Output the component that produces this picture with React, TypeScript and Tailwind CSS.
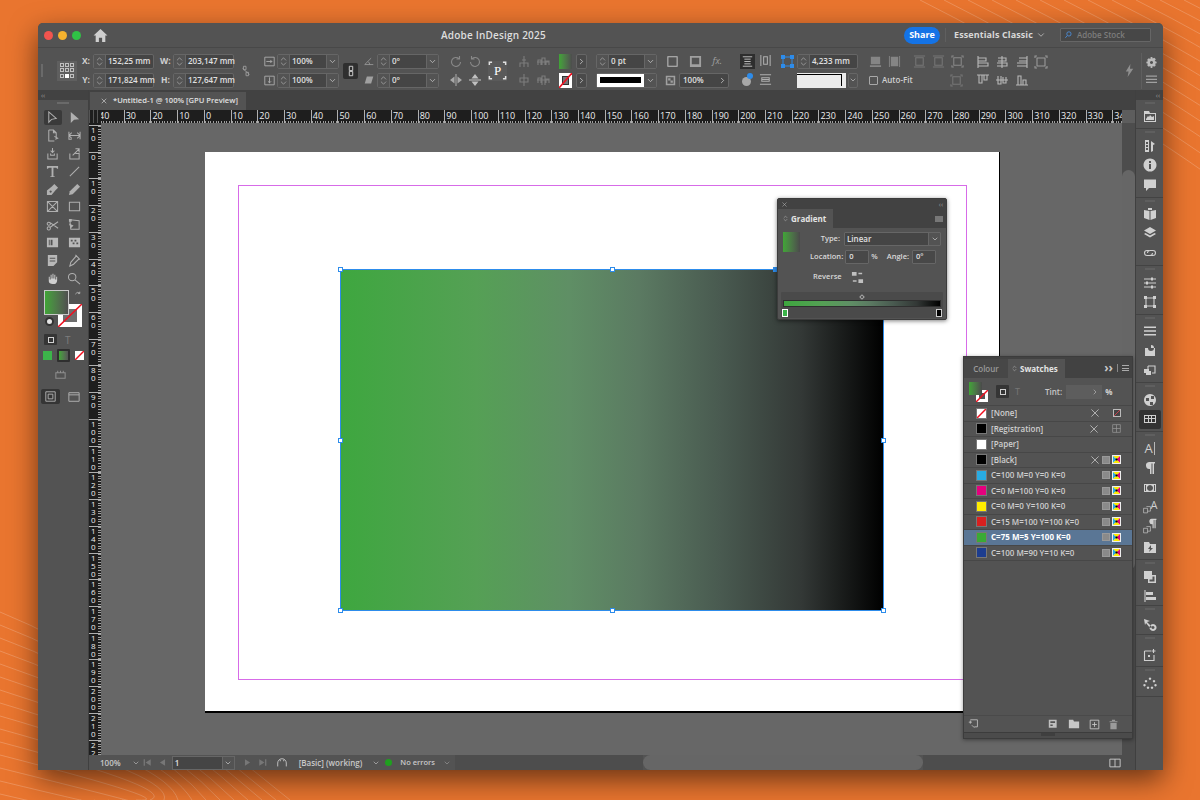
import React from 'react';
import { ChevronDown, ChevronRight, ChevronsUpDown, X } from 'lucide-react';

// small stroke/fill glyph on a 14 box
const Ico = ({ d, f, s = 14, className = 'text-[#a8a8a8]' }: { d?: string; f?: string; s?: number; className?: string }) => (
  <svg width={s} height={s} viewBox="0 0 14 14" fill="none" className={`shrink-0 ${className}`}>
    {d && <path d={d} stroke="currentColor" strokeWidth="1.1" />}
    {f && <path d={f} fill="currentColor" />}
  </svg>
);

const Stepper = () => (
  <div className="flex h-full w-[12px] shrink-0 items-center justify-center border-r border-[#666] bg-[#535353]">
    <ChevronsUpDown size={11} strokeWidth={1.3} className="text-[#c0c0c0]" />
  </div>
);

const Field = ({ value, w, drop }: { value: string; w: string; drop?: boolean }) => (
  <div className={`flex h-[15px] items-center rounded-[2px] border border-[#666] bg-[#454545] ${w}`}>
    <Stepper />
    <span className="flex-1 whitespace-nowrap pl-[2px] text-[8px] font-semibold text-[#e0e0e0]">{value}</span>
    {drop && (
      <div className="flex h-full w-[12px] items-center justify-center border-l border-[#666] bg-[#535353]">
        <ChevronDown size={9} strokeWidth={2} className="text-[#c8c8c8]" />
      </div>
    )}
  </div>
);

const Lbl = ({ children, w }: { children: string; w: string }) => (
  <span className={`shrink-0 pr-[3px] text-right text-[8.5px] font-bold text-[#d0d0d0] ${w}`}>{children}</span>
);

const TrafficLights = () => (
  <div className="flex gap-[5px] pl-[6px]">
    <span className="h-[9px] w-[9px] rounded-full bg-[#f2544e]" />
    <span className="h-[9px] w-[9px] rounded-full bg-[#f5b22e]" />
    <span className="h-[9px] w-[9px] rounded-full bg-[#30c146]" />
  </div>
);

const TitleBar = () => (
  <div className="relative flex h-[25px] shrink-0 items-center rounded-t-[5px] border-b border-[#484848] bg-[#535353]">
    <TrafficLights />
    <Ico s={15} className="ml-[12px] text-[#cfcfcf]" f="M7 1 L13.5 7 H11.5 V13 H8.5 V9 H5.5 V13 H2.5 V7 H.5 Z" />
    <span className="absolute left-[403px] text-[10px] font-semibold tracking-[0.2px] text-[#dedede]">Adobe InDesign 2025</span>
    <div className="ml-[796px] flex h-[17px] w-[36px] items-center justify-center rounded-full bg-[#1473e6] text-[9px] font-bold text-white">Share</div>
    <div className="ml-[5px] h-[14px] w-px bg-[#5f5f5f]" />
    <span className="ml-[8px] text-[9px] font-bold tracking-[0.1px] text-[#d8d8d8]">Essentials Classic</span>
    <ChevronDown size={10} strokeWidth={1.8} className="ml-[3px] text-[#c8c8c8]" />
    <div className="ml-[14px] flex h-[14px] w-[91px] items-center gap-[2px] rounded-[1px] border border-[#666] bg-[#474747] pl-[4px]">
      <Ico s={10} className="text-[#4a94e8]" d="M8.5 5.5a3 3 0 1 1-6 0a3 3 0 1 1 6 0M3 8l-2.5 3" />
      <span className="text-[8px] font-semibold text-[#7d7d7d]">Adobe Stock</span>
    </div>
  </div>
);

const RefGrid = () => (
  <div className="ml-[14px] grid h-[20px] w-[20px] grid-cols-3 place-items-center bg-[#5f5f5f] p-[2px]">
    {[0, 1, 2, 3, 4, 5, 6, 7, 8].map((i) => (
      <span key={i} className={i === 7 ? 'h-[4px] w-[4px] bg-white' : 'h-[4px] w-[4px] border border-[#c0c0c0]'} />
    ))}
  </div>
);

const Col2 = ({ a, b, className = '' }: { a: React.ReactNode; b: React.ReactNode; className?: string }) => (
  <div className={`flex flex-col gap-[4px] ${className}`}>
    <div className="flex h-[15px] items-center">{a}</div>
    <div className="flex h-[15px] items-center">{b}</div>
  </div>
);

const ArrowBtn = () => (
  <div className="flex h-[15px] w-[11px] items-center justify-center rounded-[2px] border border-[#666] bg-[#4a4a4a]">
    <ChevronRight size={9} strokeWidth={2} className="text-[#d0d0d0]" />
  </div>
);

const alignL = 'M2 1V13M2 3H10V6H2M2 8H12V11H2';
const alignC = 'M7 1V13M3 3H11V6H3M2 8H12V11H2';
const alignR = 'M12 1V13M4 3H12V6H4M2 8H12V11H2';
const alignT = 'M1 2H13M3 2V10H6V2M8 2V7H11V2';
const alignM = 'M1 7H13M3 3V11H6V3M8 4V10H11V4';
const alignB = 'M1 12H13M3 12V3H6V12M8 12V7H11V12';
const frameFit = 'M3 3H11V11H3ZM1 1H13M1 13H13';
const frameIn = 'M3 3H11V11H3ZM1 3V1H3M11 1H13V3M1 11V13H3M11 13H13V11';
const frameGradient = 'bg-[linear-gradient(90deg,#3ea73f_0%,#55a055_25%,#5f8f65_42%,#5b7a62_55%,#495a50_70%,#333836_85%,#000_100%)]';

const ControlBar = () => (
  <div className="flex h-[42px] shrink-0 items-center bg-[#535353] pt-[3px]">
    <div className="ml-[3px] h-[13px] w-[2px] bg-[#6a6a6a]" />
    <RefGrid />
    <Col2
      a={<><Lbl w="w-[16px]">X:</Lbl><Field value="152,25 mm" w="w-[61px]" /></>}
      b={<><Lbl w="w-[16px]">Y:</Lbl><Field value="171,824 mm" w="w-[61px]" /></>}
    />
    <Col2
      className="ml-[6px]"
      a={<><Lbl w="w-[13px]">W:</Lbl><Field value="203,147 mm" w="w-[61px]" /></>}
      b={<><Lbl w="w-[13px]">H:</Lbl><Field value="127,647 mm" w="w-[61px]" /></>}
    />
    <Ico className="ml-[6px] text-[#9a9a9a]" s={12} d="M4 1.500h3v4H4zM7 8.500h3v4H7zM3 4l8 7" />
    <Col2
      className="ml-[12px]"
      a={<><Ico s={11} className="mr-[2px] text-[#b0b0b0]" d="M1 1.500H13V12.500H1ZM3 7H10M8 5l2 2l-2 2" /><Field value="100%" w="w-[62px]" drop /></>}
      b={<><Ico s={11} className="mr-[2px] text-[#b0b0b0]" d="M1 1.500H13V12.500H1ZM7 3V10M5 8l2 2l2-2" /><Field value="100%" w="w-[62px]" drop /></>}
    />
    <div className="ml-[4px] flex h-[16px] w-[15px] items-center justify-center rounded-[2px] bg-[#2f2f2f]">
      <Ico s={12} className="text-[#d0d0d0]" d="M5 1.500h4v5H5zM5 7.500h4v5H5z" />
    </div>
    <Col2
      className="ml-[6px]"
      a={<><Ico s={10} className="mr-[3px] text-[#a0a0a0]" d="M1 12H13M1 12L10 3M8 12a6 6 0 0 0-2-4" /><Field value="0°" w="w-[62px]" drop /></>}
      b={<><Ico s={10} className="mr-[3px] text-[#a0a0a0]" f="M4 2H13L10 12H1Z" /><Field value="0°" w="w-[62px]" drop /></>}
    />
    <div className="ml-[7px] grid w-[38px] grid-cols-2 gap-y-[4px] justify-items-center">
      <Ico className="text-[#888]" d="M11.500 7a4.500 4.500 0 1 1-1.500-3.400M10.500 1v3h-3" />
      <Ico className="text-[#888]" d="M2.500 7a4.500 4.500 0 1 0 1.500-3.400M3.500 1v3h3" />
      <Ico className="text-[#a8a8a8]" d="M7 1V13" f="M5.500 3.500V10.500L1 7ZM8.500 3.500V10.500L13 7Z" />
      <Ico className="text-[#c0c0c0]" d="M1 7H13" f="M3.500 5.500H10.500L7 1ZM3.500 8.500H10.500L7 13Z" />
    </div>
    <div className="relative ml-[4px] flex h-[20px] w-[19px] items-center justify-center bg-[#5a5a5a]">
      <span className="font-['Liberation_Serif',serif] text-[13px] leading-none text-white">P</span>
      <Ico s={19} className="absolute inset-0 text-[#e0e0e0]" d="M1 3V1H3M11 1H13V3M1 11V13H3M11 13H13V11" />
    </div>
    <div className="ml-[7px] grid w-[38px] grid-cols-2 gap-y-[4px] justify-items-center">
      <Ico className="text-[#7d7d7d]" d="M7 1V12M3 12V8H11V12M5 5H9" />
      <Ico className="text-[#7d7d7d]" d="M2 10V5H5V10M6 10V3H9V10M10 10V6H13V10M1 7H13" />
      <Ico className="text-[#7d7d7d]" d="M7 1V13M3 5H11V9H3Z" />
      <Ico className="text-[#7d7d7d]" d="M2 10V5H5V10M6 12V3H9V12M10 10V6H13V10M1 7H13" />
    </div>
    <div className="ml-[7px] flex flex-col gap-[4px]">
      <div className="h-[15px] w-[13px] bg-gradient-to-r from-[#3fa535] to-[#4d4d4d]" />
      <div className="relative h-[15px] w-[13px] overflow-hidden bg-white">
        <div className="absolute inset-[3px] border border-[#333] bg-[#777]" />
        <svg viewBox="0 0 13 15" className="absolute inset-0"><path d="M0 15L13 0" stroke="#f01020" strokeWidth="1.6" /></svg>
      </div>
    </div>
    <div className="ml-[4px] flex flex-col gap-[4px]">
      <ArrowBtn />
      <ArrowBtn />
    </div>
    <div className="ml-[9px] flex flex-col gap-[4px]">
      <Field value="0 pt" w="w-[61px]" drop />
      <div className="flex h-[15px] w-[61px] items-center rounded-[2px] border border-[#666]">
        <div className="flex h-full flex-1 items-center bg-white px-[3px]">
          <div className="h-[6px] w-full bg-black" />
        </div>
        <div className="flex h-full w-[12px] items-center justify-center bg-[#535353]">
          <ChevronDown size={9} strokeWidth={2} className="text-[#c8c8c8]" />
        </div>
      </div>
    </div>
    <div className="ml-[8px] flex w-[64px] flex-col gap-[4px]">
      <div className="flex h-[15px] items-center justify-between pl-[1px] pr-[7px]">
        <Ico s={13} className="text-[#c0c0c0]" d="M2 2H12V12H2Z" />
        <Ico s={13} className="text-[#a0a0a0]" f="M1 1H13V13H1ZM3 3V10H11V3Z" />
        <span className="text-[9px] italic text-[#a0a0a0]">fx.</span>
      </div>
      <div className="flex h-[15px] items-center gap-[4px]">
        <Ico s={11} className="-mr-[1px] text-[#a0a0a0]" f="M1 1H13V13H1ZM3 3V11H11V3ZM4 4H7V7H4ZM7 7H10V10H7Z" />
        <div className="flex h-full flex-1 items-center rounded-[2px] border border-[#666] bg-[#454545] pl-[3px] text-[8px] font-semibold text-[#e0e0e0]">
          <span className="flex-1">100%</span>
          <ChevronRight size={9} strokeWidth={2} className="mr-[1px] text-[#d0d0d0]" />
        </div>
      </div>
    </div>
    <div className="ml-[9px] grid w-[37px] grid-cols-2 gap-y-[4px] justify-items-center">
      <div className="flex h-[15px] w-[15px] items-center justify-center bg-[#2e2e2e]">
        <Ico s={11} className="text-[#cfcfcf]" d="M1 1H13M1 13H13M3 4H11M3 7H11M3 10H11" />
      </div>
      <Ico s={13} className="text-[#b0b0b0]" d="M2 1V13M12 1V13M5 3H9V11H5Z" />
      <div className="relative h-[15px] w-[13px]">
        <span className="absolute left-[1px] top-[4px] h-[9px] w-[9px] rounded-full bg-[#a8a8a8]" />
        <span className="absolute left-[6px] top-0 h-[6px] w-[6px] rounded-full bg-[#2d8ceb]" />
      </div>
      <Ico s={13} className="text-[#b0b0b0]" d="M1 2H13M1 12H13M3 7H11M3 5H11V9H3Z" />
    </div>
    <div className="mb-[19px] ml-[6px] h-[13px] w-[13px] shrink-0">
      <svg viewBox="0 0 13 13"><path d="M2 2H11V11H2Z" stroke="#2d8ceb" fill="none" /><path d="M0 0H4V4H0ZM9 0H13V4H9ZM0 9H4V13H0ZM9 9H13V13H9Z" fill="#2d8ceb" /></svg>
    </div>
    <div className="ml-[3px] flex flex-col gap-[4px]">
      <Field value="4,233 mm" w="w-[61px]" />
      <div className="flex h-[15px] w-[61px] items-center">
        <div className="h-full w-[49px] bg-[#ececec] pl-0 pr-[4px] pt-[1px]">
          <div className="h-[12px] border-r border-t border-black" />
        </div>
        <div className="ml-[2px] flex h-full w-[10px] items-center justify-center rounded-[2px] border border-[#666]">
          <ChevronDown size={8} strokeWidth={2} className="text-[#c8c8c8]" />
        </div>
      </div>
    </div>
    <div className="ml-[10px] flex w-[96px] flex-col gap-[4px]">
      <div className="flex h-[15px] items-center gap-[6px] pl-[1px]">
        <Ico s={13} className="text-[#858585]" f="M2 2H12V10H2ZM1 11H13V13H1Z" />
        <Ico s={13} className="text-[#858585]" f="M3 2H11V12H3ZM1 1H2V13H1ZM12 1H13V13H12Z" />
        <Ico s={13} className="ml-[6px] text-[#777]" d={frameFit} />
        <Ico s={13} className="text-[#777]" d={frameFit} />
        <Ico s={13} className="text-[#8a8a8a]" d={frameIn} />
      </div>
      <div className="flex h-[15px] items-center">
        <div className="ml-[1px] h-[9px] w-[9px] rounded-[1px] border border-[#a8a8a8]" />
        <span className="ml-[4px] text-[8px] font-semibold text-[#d0d0d0]">Auto-Fit</span>
        <Ico s={13} className="ml-auto mr-[1px] text-[#777]" d={frameIn} />
      </div>
    </div>
    <div className="ml-[9px] grid w-[78px] grid-cols-4 gap-y-[4px] justify-items-center">
      <Ico className="text-[#b8b8b8]" d={alignL} />
      <Ico className="text-[#b8b8b8]" d={alignC} />
      <Ico className="text-[#b8b8b8]" d={alignR} />
      <Ico className="text-[#9a9a9a]" d={frameIn} />
      <Ico className="text-[#b8b8b8]" d={alignT} />
      <Ico className="text-[#b8b8b8]" d={alignM} />
      <Ico className="text-[#b8b8b8]" d={alignB} />
      <span />
    </div>
    <Ico s={13} className="ml-auto text-[#8f8f8f]" f="M8 0L3 8H6L5 14L11 5H7.500Z" />
    <div className="ml-[5px] mr-[3px] flex h-[36px] w-[19px] flex-col items-center justify-between border-l border-[#5f5f5f] py-[4px] pl-[1px]">
      <Ico s={11} className="text-[#bbb]" f="M6 0H8L8.500 2L10.500 1L12.500 3L11 5L13.500 6V8L11.500 8.500L12.500 10.500L10.500 12.500L8.500 11.500L8 14H6L5.500 11.500L3.500 12.500L1.500 10.500L2.500 8.500L.5 8V6L2.500 5.500L1.500 3.500L3.500 1.500L5.500 2.500ZM7 5a2 2 0 1 0 .01 0Z" />
      <Ico s={11} className="text-[#a0a0a0]" f="M0 2H14V3.500H0ZM0 6H14V7.500H0ZM0 10H14V11.500H0Z" />
    </div>
  </div>
);

const tools: { d?: string; f?: string; cls?: string }[] = [
  { d: 'M3 1L3 12L6 9L11 8Z' },
  { f: 'M3 1L3 13L6.500 9.500L12 9Z' },
  { d: 'M3 1H8L11 4V9M3 1V13H9M8 1V4H11M9 8L12.500 10L10 11' },
  { d: 'M1 3V11H4M1 7H13M1 7L4 4M1 7L4 10M13 3V11M13 7L10 4M13 7L10 10' },
  { d: 'M2 7V13H12V7M5 7V9H9V7M7 1V6M5 4L7 6L9 4' },
  { d: 'M2 7V13H12V7H8M5 9L12 2M8 2H12V6' },
  { f: 'M1 1H13V4H12L11 3H8V12L9.500 12.500V13H4.500V12.500L6 12V3H3L2 4H1Z' },
  { d: 'M2 12L12 2' },
  { f: 'M9 1L13 5L10 8L6 13L1 13L1 8L6 4ZM5 8a1.200 1.200 0 1 0 .01 0Z' },
  { f: 'M10 1L13 4L5 12L1 13L2 9Z' },
  { d: 'M1.500 1.500H12.500V12.500H1.500ZM1.500 1.500L12.500 12.500M12.500 1.500L1.500 12.500' },
  { d: 'M1.500 2.500H12.500V11.500H1.500Z' },
  { d: 'M3 4.500a1.700 1.700 0 1 0 .01 0M3 9.500a1.700 1.700 0 1 0 .01 0M4.500 5L13 11M4.500 10L13 4' },
  { d: 'M2 2L12 3V12H3Z', f: 'M1 1H4V4H1ZM1 6L6 8L3 11Z' },
  { f: 'M1 2H13V12H1ZM3 4V10H4V4ZM5 4V10H7V4Z', cls: 'text-[#b8b8b8]' },
  { f: 'M1 2H13V12H1ZM3 4V6H5V4ZM7 4V6H9V4ZM5 7V9H7V7ZM9 7V9H11V7Z', cls: 'text-[#b8b8b8]' },
  { f: 'M2 1H12V9L8 13H2ZM4 4V5H10V4ZM4 7V8H10V7Z', cls: 'text-[#b8b8b8]' },
  { d: 'M9 2L12 5L6 11L2 13L3 9ZM8 1L13 6' },
  { f: 'M3 5V10C3 12 5 13 7 13H9C11 13 12 11 12 9V5H11V8H10V3H9V7H8V2H7V7H6V3H5V8H4V5Z', cls: 'text-[#cfcfcf]' },
  { d: 'M8.500 5.500a4 4 0 1 1-8 0a4 4 0 1 1 8 0M7.500 8.500L13 13' },
];

const ToolGrid = () => (
  <div className="grid grid-cols-2 pl-[4px] pr-[3px]">
    {tools.map((t, i) => (
      <div key={i} className="flex h-[17.8px] items-center justify-center">
        <div className={`flex h-[15px] w-[18px] items-center justify-center rounded-[2px] ${i === 0 ? 'bg-[#3a3a3a]' : ''}`}>
          <Ico d={t.d} f={t.f} s={13} className={t.cls ?? 'text-[#b0b0b0]'} />
        </div>
      </div>
    ))}
  </div>
);

const LeftToolbar = () => (
  <div className="flex w-[51px] shrink-0 flex-col border-r border-[#404040] bg-[#535353]">
    <div className="flex h-[10px] items-center bg-[#424242] pl-[3px] text-[7px] leading-none text-[#9a9a9a]">‹‹</div>
    <div className="mx-auto mt-[2px] h-[2px] w-[12px] bg-[#6a6a6a]" />
    <div className="mt-[5px]"><ToolGrid /></div>
    <div className="relative ml-[6px] mt-[3px] h-[42px] w-[40px]">
      <div className="absolute left-[14px] top-[14px] h-[23px] w-[24px] border-[5px] border-white bg-[#6e6e6e]" />
      <svg viewBox="0 0 24 23" className="absolute left-[14px] top-[14px] h-[23px] w-[24px]"><path d="M0 23L24 0" stroke="#f01020" strokeWidth="1.600" /></svg>
      <div className="absolute left-0 top-0 h-[25px] w-[25px] border border-[#c8c8c8] bg-gradient-to-r from-[#3fa535] to-[#4f4f4f]" />
      <Ico s={9} className="absolute left-[30px] top-[1px] text-[#c0c0c0]" d="M2 5a5 5 0 0 1 7-2M9 1V4H6" />
      <div className="absolute left-[1px] top-[27px] h-[9px] w-[9px] rounded-full border-[2px] border-[#333] bg-[#e4e4e4]" />
    </div>
    <div className="ml-[6px] mt-[1px] flex h-[14px] items-center gap-[8px]">
      <div className="flex h-[11px] w-[13px] items-center justify-center rounded-[1px] bg-[#353535]">
        <span className="h-[6px] w-[6px] border border-[#d0d0d0]" />
      </div>
      <span className="text-[10px] leading-none text-[#7d7d7d]">T</span>
    </div>
    <div className="ml-[5px] mt-[2px] flex h-[14px] items-center gap-[5px]">
      <span className="h-[9px] w-[9px] bg-[#3cb44a]" />
      <span className="flex h-[13px] w-[13px] items-center justify-center rounded-[1px] bg-[#2f2f2f]">
        <span className="h-[9px] w-[9px] bg-gradient-to-r from-[#3fa535] to-[#555]" />
      </span>
      <span className="relative h-[9px] w-[9px] overflow-hidden bg-white">
        <svg viewBox="0 0 9 9" className="absolute inset-0"><path d="M0 9L9 0" stroke="#f01020" strokeWidth="1.500" /></svg>
      </span>
    </div>
    <div className="ml-[5px] mt-[5px] flex justify-center pr-[11px]">
      <Ico s={13} className="text-[#8f8f8f]" d="M2 5H12V11H2ZM4 3V5M7 3V5M10 3V5" />
    </div>
    <div className="ml-[3px] mt-[9px] flex h-[14px] items-center gap-[8px]">
      <div className="flex h-[15px] w-[19px] items-center justify-center rounded-[2px] bg-[#353535]">
        <Ico s={11} className="text-[#bbb]" d="M1 1H13V13H1ZM4 4H10V10H4Z" />
      </div>
      <Ico s={12} className="text-[#b0b0b0]" d="M1 2H13V12H1ZM1 4.500H13" />
    </div>
  </div>
);

const hLabels = [40, 30, 20, 10, 0, 10, 20, 30, 40, 50, 60, 70, 80, 90, 100, 110, 120, 130, 140, 150, 160, 170, 180, 190, 200, 210, 220, 230, 240, 250, 260, 270, 280, 290, 300, 310, 320, 330, 340];
const vLabels = [10, 0, 10, 20, 30, 40, 50, 60, 70, 80, 90, 100, 110, 120, 130, 140, 150, 160, 170, 180, 190, 200, 210, 220];

const HRuler = () => (
  <div className="flex h-[13px] shrink-0 bg-[#5d5d5d]">
    <div className="z-10 h-full w-[12px] shrink-0 bg-[#1e1e1e] bg-[repeating-linear-gradient(90deg,#555_0_1px,transparent_1px_4px)]" />
    <div className="flex w-[1021px] overflow-hidden bg-[#1e1e1e]">
      <div className="-ml-[4px] flex">
        {hLabels.map((n, i) => (
          <div key={i} className="flex h-[13px] w-[26.73px] shrink-0 flex-col justify-between border-l border-[#b0b0b0]">
            <span className="pl-[1px] text-[9px] leading-[11px] text-[#eee]">{n}</span>
            <span className="h-[2px] bg-[repeating-linear-gradient(90deg,#a0a0a0_0_1px,transparent_1px_2.670px)]" />
          </div>
        ))}
      </div>
    </div>
  </div>
);

const VRuler = () => (
  <div className="w-[12px] shrink-0 overflow-hidden bg-[#1e1e1e] pt-[2px]">
    {vLabels.map((n, i) => (
      <div key={i} className="flex h-[26.73px] w-[12px] justify-between border-t border-[#b0b0b0]">
        <span className="ml-[2px] w-[5px] break-all text-[8px] leading-[8px] text-[#eee]">{n}</span>
        <span className="h-full w-[3px] bg-[repeating-linear-gradient(180deg,#a0a0a0_0_1px,transparent_1px_2.670px)]" />
      </div>
    ))}
  </div>
);

const Handle = ({ className }: { className: string }) => (
  <span className={`absolute h-[5px] w-[5px] border border-[#2d8ceb] bg-white ${className}`} />
);

const GradientFrame = () => (
  <div className={`absolute left-[135px] top-[117px] h-[342px] w-[544px] border border-[#2d8ceb] ${frameGradient}`}>
    <Handle className="-left-[3px] -top-[3px]" />
    <Handle className="left-[269px] -top-[3px]" />
    <span className="absolute left-[432px] -top-[3px] h-[5px] w-[5px] bg-[#2d8ceb]" />
    <Handle className="-right-[3px] -top-[3px]" />
    <Handle className="-left-[3px] top-[168px]" />
    <Handle className="-right-[3px] top-[168px]" />
    <Handle className="-bottom-[3px] -left-[3px]" />
    <Handle className="-bottom-[3px] left-[269px]" />
    <Handle className="-bottom-[3px] -right-[3px]" />
  </div>
);

const Page = () => (
  <div className="absolute left-[104px] top-[29px] h-[561px] w-[795px] border-b-2 border-r border-black bg-white">
    <div className="absolute left-[33px] top-[33px] h-[495px] w-[729px] border border-[#d76be8]" />
    <GradientFrame />
  </div>
);

const GradientPanel = () => (
  <div className="absolute left-[688px] top-[75px] flex h-[122px] w-[170px] flex-col rounded-[2px] border border-[#3c3c3c] bg-[#535353] shadow-[0_1px_4px_rgba(0,0,0,0.5)]">
    <div className="flex h-[10px] items-center justify-between bg-[#424242] px-[3px]">
      <X size={7} strokeWidth={2} className="text-[#b0b0b0]" />
      <span className="text-[7px] leading-none text-[#9a9a9a]">‹‹</span>
    </div>
    <div className="flex h-[19px] items-center bg-[#424242]">
      <div className="flex h-full w-[55px] items-center gap-[2px] bg-[#535353] pl-[4px]">
        <ChevronsUpDown size={7} strokeWidth={1.500} className="text-[#c8c8c8]" />
        <span className="text-[8px] font-bold text-[#e4e4e4]">Gradient</span>
      </div>
      <span className="ml-auto mr-[3px] flex h-[6px] w-[8px] bg-[#777]" />
    </div>
    <div className="flex px-[5px] pt-[4px]">
      <div className="h-[20px] w-[19px] bg-gradient-to-r from-[#3fa535] to-[#4a4a4a]" />
      <div className="ml-[8px] flex flex-1 flex-col">
        <div className="flex h-[14px] items-center">
          <span className="w-[32px] text-right text-[7.500px] font-semibold text-[#d8d8d8]">Type:</span>
          <div className="ml-[4px] flex h-[14px] w-[97px] items-center rounded-[1px] border border-[#666] bg-[#454545] pl-[2px]">
            <span className="flex-1 text-[8px] font-semibold text-[#e0e0e0]">Linear</span>
            <span className="flex h-full w-[12px] items-center justify-center border-l border-[#666] bg-[#535353]">
              <ChevronDown size={8} strokeWidth={2} className="text-[#d0d0d0]" />
            </span>
          </div>
        </div>
      </div>
    </div>
    <div className="-mt-[2px] flex h-[14px] items-center text-[7.500px] font-semibold text-[#d8d8d8]">
      <span className="ml-[32px]">Location:</span>
      <span className="ml-[2px] flex h-[14px] w-[24px] items-center rounded-[1px] border border-[#666] bg-[#484848] pl-[3px] text-[#e0e0e0]">0</span>
      <span className="ml-[2px]">%</span>
      <span className="ml-[9px]">Angle:</span>
      <span className="ml-[3px] flex h-[14px] w-[24px] items-center rounded-[1px] border border-[#666] bg-[#484848] pl-[3px] text-[#e0e0e0]">0°</span>
    </div>
    <div className="mt-[5px] flex h-[16px] items-center text-[7.500px] font-semibold text-[#d8d8d8]">
      <span className="ml-[35px]">Reverse</span>
      <Ico s={13} className="ml-[9px] text-[#c0c0c0]" f="M1 1H6V5H1ZM8 9H13V13H8ZM8 2H12V3.500H8ZM2 10H6V11.500H2Z" />
    </div>
    <div className="mx-[3px] mt-[7px] flex h-[26px] flex-col items-stretch rounded-[1px] bg-[#4a4a4a]">
      <span className="mx-auto mt-[3px] h-[4px] w-[4px] shrink-0 rotate-45 border border-[#aaa]" />
      <div className={`mx-[2px] mt-[1px] h-[7px] shrink-0 border border-[#2f2f2f] ${frameGradient}`} />
      <div className="mt-[2px] flex justify-between px-[1px]">
        <span className="h-[8px] w-[6px] border border-white bg-[#3cb44a]" />
        <span className="h-[8px] w-[6px] border border-[#cfcfcf] bg-black" />
      </div>
    </div>
  </div>
);

const swatches = [
  { name: '[None]', color: 'bg-white', none: true, tool: true, last: 'none' },
  { name: '[Registration]', color: 'bg-black', tool: true, last: 'reg' },
  { name: '[Paper]', color: 'bg-white' },
  { name: '[Black]', color: 'bg-black', tool: true, last: 'cmyk' },
  { name: 'C=100 M=0 Y=0 K=0', color: 'bg-[#29abe2]', last: 'cmyk' },
  { name: 'C=0 M=100 Y=0 K=0', color: 'bg-[#e5007e]', last: 'cmyk' },
  { name: 'C=0 M=0 Y=100 K=0', color: 'bg-[#ffed00]', last: 'cmyk' },
  { name: 'C=15 M=100 Y=100 K=0', color: 'bg-[#d9201f]', last: 'cmyk' },
  { name: 'C=75 M=5 Y=100 K=0', color: 'bg-[#3aaa35]', last: 'cmyk', selected: true },
  { name: 'C=100 M=90 Y=10 K=0', color: 'bg-[#1d3d8f]', last: 'cmyk' },
];

const Cmyk = () => (
  <svg width="9" height="9" viewBox="0 0 9 9" className="shrink-0">
    <path d="M0 0H9V9H0Z" fill="#eee" />
    <path d="M1 1H8L4.500 4.500Z" fill="#ffed00" />
    <path d="M1 1V8L4.500 4.500Z" fill="#29abe2" />
    <path d="M8 1V8L4.500 4.500Z" fill="#e5007e" />
    <path d="M1 8H8L4.500 4.500Z" fill="#ffed00" />
    <path d="M3.500 3.500H5.500V5.500H3.500Z" fill="#000" />
  </svg>
);

const SwatchRow = ({ s }: { s: (typeof swatches)[number] }) => (
  <div className={`flex h-[15.500px] items-center border-b border-[#474747] pl-[13px] ${s.selected ? 'bg-[#5a7695]' : ''}`}>
    <span className={`relative h-[9px] w-[9px] shrink-0 overflow-hidden outline outline-1 outline-[#777] ${s.color}`}>
      {s.none && <svg viewBox="0 0 9 9" className="absolute inset-0"><path d="M0 9L9 0" stroke="#f01020" strokeWidth="1.500" /></svg>}
    </span>
    <span className={`ml-[5px] flex-1 truncate text-[8px] ${s.selected ? 'font-bold text-white' : 'font-semibold text-[#cfcfcf]'}`}>{s.name}</span>
    {s.tool && <Ico s={10} className="mr-[2px] text-[#c8c8c8]" d="M2 2L12 12M12 2L2 12" />}
    {s.last === 'cmyk' && (
      <>
        <span className="mr-[2px] h-[8px] w-[8px] border border-[#999] bg-[#8a8a8a]" />
        <Cmyk />
      </>
    )}
    {s.last === 'none' && (
      <span className="relative ml-[11px] h-[8px] w-[8px] overflow-hidden border border-[#bbb] bg-[#444]">
        <svg viewBox="0 0 8 8" className="absolute inset-0"><path d="M0 8L8 0" stroke="#f04050" strokeWidth="1" /></svg>
      </span>
    )}
    {s.last === 'reg' && <Ico s={9} className="ml-[11px] text-[#999]" d="M1 1H13V13H1ZM7 1V13M1 7H13" />}
    <span className="w-[11px] shrink-0" />
  </div>
);

const SwatchesPanel = () => (
  <div className="absolute left-[874px] top-[233px] flex h-[383px] w-[170px] flex-col border border-[#3c3c3c] bg-[#535353] shadow-[0_1px_4px_rgba(0,0,0,0.4)]">
    <div className="flex h-[21px] shrink-0 items-end bg-[#424242]">
      <div className="flex h-[19px] w-[44px] items-center justify-center bg-[#474747] text-[8px] font-semibold text-[#9a9a9a]">Colour</div>
      <div className="flex h-[19px] w-[57px] items-center gap-[2px] bg-[#535353] pl-[3px]">
        <ChevronsUpDown size={7} strokeWidth={1.500} className="text-[#c8c8c8]" />
        <span className="text-[8px] font-bold text-[#e4e4e4]">Swatches</span>
      </div>
      <div className="mb-[4px] ml-auto flex items-center gap-[4px] pr-[3px] text-[#c8c8c8]">
        <span className="text-[12px] font-bold leading-none">››</span>
        <span className="h-[8px] w-px bg-[#888]" />
        <span className="h-[6px] w-[7px] bg-[repeating-linear-gradient(180deg,#aaa_0_1px,transparent_1px_2.500px)]" />
      </div>
    </div>
    <div className="flex h-[27px] shrink-0 items-center">
      <div className="relative ml-[5px] h-[20px] w-[20px]">
        <div className="absolute left-[7px] top-[8px] h-[12px] w-[12px] border-[3px] border-white bg-[#555]" />
        <svg viewBox="0 0 12 12" className="absolute left-[7px] top-[8px] h-[12px] w-[12px]"><path d="M0 12L12 0" stroke="#f01020" strokeWidth="1.500" /></svg>
        <div className="absolute left-0 top-0 h-[13px] w-[13px] bg-gradient-to-r from-[#3fa535] to-[#4a4a4a]" />
      </div>
      <div className="ml-[7px] flex h-[13px] w-[13px] items-center justify-center rounded-[1px] bg-[#353535]">
        <span className="h-[6px] w-[6px] border border-[#d0d0d0]" />
      </div>
      <span className="ml-[6px] text-[9px] text-[#777]">T</span>
      <span className="ml-[25px] text-[8px] font-semibold text-[#c8c8c8]">Tint:</span>
      <div className="ml-[4px] flex h-[14px] w-[36px] items-center justify-end bg-[#5d5d5d] pr-[3px]">
        <ChevronRight size={8} strokeWidth={2} className="text-[#bbb]" />
      </div>
      <span className="ml-[3px] text-[8px] font-bold text-[#d0d0d0]">%</span>
    </div>
    <div className="shrink-0 border-t border-[#474747]">
      {swatches.map((s) => <SwatchRow key={s.name} s={s} />)}
    </div>
    <div className="flex-1" />
    <div className="flex h-[17px] shrink-0 items-center border-t border-[#4a4a4a] pl-[4px] text-[#bfbfbf]">
      <Ico s={11} className="text-[#bfbfbf]" d="M3 1H12V10H8M1 4H5M3 2V6M5 8L8 11" />
      <Ico s={11} className="ml-[69px] text-[#bfbfbf]" f="M1 1H11V11H1ZM3 3V5H9V3ZM3 7V9H6V7Z" />
      <Ico s={12} className="ml-[9px] text-[#c8c8c8]" f="M1 2H6L7 4H13V12H1Z" />
      <Ico s={11} className="ml-[9px] text-[#c8c8c8]" d="M1.500 1.500H12.500V12.500H1.500ZM7 4V10M4 7H10" />
      <Ico s={11} className="ml-[8px] text-[#9a9a9a]" f="M2 3H12V4H2ZM3 5H11V13H3ZM5 1H9V2.500H5Z" />
    </div>
    <div className="h-[6px] shrink-0 border-t border-[#3c3c3c] bg-[#4b4b4b]">
      <span className="mx-auto block h-[3px] w-[14px] bg-[#3f3f3f]" />
    </div>
  </div>
);

const StatusBar = () => (
  <div className="flex h-[15px] shrink-0 items-center bg-[#535353] text-[8px] font-semibold text-[#c8c8c8]">
    <span className="ml-[11px]">100%</span>
    <ChevronDown size={8} strokeWidth={2} className="ml-[11px] text-[#b8b8b8]" />
    <Ico s={9} className="ml-[3px] text-[#777]" f="M1 2H3V12H1ZM12 2V12L4 7Z" />
    <Ico s={9} className="ml-[6px] text-[#777]" f="M11 2V12L3 7Z" />
    <div className="ml-[5px] flex h-[14px] w-[63px] items-center border border-[#666] bg-[#454545] pl-[2px]">
      <span className="flex-1 text-[#e0e0e0]">1</span>
      <span className="flex h-full w-[12px] items-center justify-center border-l border-[#666] bg-[#535353]">
        <ChevronDown size={8} strokeWidth={2} className="text-[#d0d0d0]" />
      </span>
    </div>
    <Ico s={9} className="ml-[8px] text-[#777]" f="M3 2V12L11 7Z" />
    <Ico s={9} className="ml-[6px] text-[#777]" f="M11 2H13V12H11ZM2 2V12L10 7Z" />
    <Ico s={12} className="ml-[9px] text-[#c0c0c0]" d="M2 11V7a5 5 0 0 1 10 0v4M5 5V3M9 5V3" />
    <span className="ml-[11px]">[Basic] (working)</span>
    <ChevronDown size={8} strokeWidth={2} className="ml-[10px] text-[#c0c0c0]" />
    <span className="ml-[5px] h-[7px] w-[7px] rounded-full bg-[#1fa01f]" />
    <span className="ml-[8px] text-[7.500px]">No errors</span>
    <ChevronDown size={8} strokeWidth={2} className="ml-[8px] text-[#999]" />
    <div className="ml-[4px] h-full flex-1 bg-[#4d4d4d]" />
    <div className="h-full w-[280px] shrink-0 rounded-full bg-[#666]" />
    <div className="flex h-full w-[212px] shrink-0 items-center justify-end bg-[#4d4d4d] pr-[14px]">
      <Ico s={12} className="text-[#c8c8c8]" d="M1 2.500H13V11.500H1ZM7 2.500V11.500" />
    </div>
  </div>
);

const DockIcon = ({ d, f, sel }: { d?: string; f?: string; sel?: boolean }) => (
  <div className={`flex h-[19.600px] w-[22px] items-center justify-center ${sel ? 'rounded-[2px] bg-[#333]' : ''}`}>
    <Ico s={14} d={d} f={f} className="text-[#d0d0d0]" />
  </div>
);

const DockGroup = ({ className, children }: { className: string; children: React.ReactNode }) => (
  <div className={`relative flex flex-col items-center border-b border-[#434343] ${className}`}>
    <span className="absolute left-[9px] top-[2px] h-[2px] w-[10px] bg-[#5f5f5f]" />
    {children}
  </div>
);

const RightDock = () => (
  <div className="flex w-[28px] shrink-0 flex-col border-l border-[#404040] bg-[#535353]">
    <div className="flex h-[10px] items-center justify-end bg-[#424242] pr-[3px] text-[7px] leading-none text-[#9a9a9a]">‹‹</div>
    <DockGroup className="h-[29px] pt-[6px]">
      <DockIcon f="M1 2H6L7 4H13V13H1ZM2 5V12H12V5ZM3 10L5 7L6 8L7 6L9 8L11 7V11H3Z" />
    </DockGroup>
    <DockGroup className="h-[69px] pt-[7px]">
      <DockIcon f="M2 1H6V13H2ZM8 2L12 5L10 6V12L8 13ZM3 3V5H5V3ZM3 6V8H5V6ZM3 9V11H5V9Z" />
      <DockIcon f="M7 0.500a6.500 6.500 0 1 0 .01 0ZM6 3H8V5H6ZM6 6H8V11H6Z" />
      <DockIcon f="M1 1.500H13V10H6L3 13V10H1Z" />
    </DockGroup>
    <DockGroup className="h-[68px] pt-[6px]">
      <DockIcon f="M1 3L6.500 4V13L1 11ZM13 3L7.500 4V13L13 11ZM5 1H9V3H5Z" />
      <DockIcon f="M7 1L13 4.500L7 8L1 4.500ZM2.500 7L7 9.500L11.500 7L13 8L7 11.500L1 8Z" />
      <DockIcon d="M6 4.500H4a2.500 2.500 0 0 0 0 5H7a2.500 2.500 0 0 0 2.500-2.500M8 9.500H10a2.500 2.500 0 0 0 0-5H7a2.500 2.500 0 0 0-2.500 2.500" />
    </DockGroup>
    <DockGroup className="h-[49px] pt-[7px]">
      <DockIcon d="M1 3H13M1 7H13M1 11H13" f="M8 1.500h2v3H8ZM3 5.500h2v3H3ZM8 9.500h2v3H8Z" />
      <DockIcon d="M3 3H11V11H3Z" f="M1 1H4V4H1ZM10 1H13V4H10ZM1 10H4V13H1ZM10 10H13V13H10Z" />
    </DockGroup>
    <DockGroup className="h-[68px] pt-[6px]">
      <DockIcon f="M1 2.500H13V4H1ZM1 6.300H13V7.800H1ZM1 10H13V11.500H1Z" />
      <DockIcon f="M2 5H5A3 3 0 1 0 8 2V5H12V13H2Z" />
      <DockIcon d="M5 3H12V10H9M5 3V6" f="M1 6H6V8H8V12H3V10H1Z" />
    </DockGroup>
    <DockGroup className="h-[49px] pt-[7px]">
      <DockIcon f="M7 1a6 6 0 1 0 .01 0ZM3 5H6V8H3ZM8 3H11V6H8ZM7 9H10V12H7Z" />
      <DockIcon sel f="M1 3H13V11H1ZM2 4V6H5V4ZM6 4V6H8V4ZM9 4V6H12V4ZM2 7V10H5V7ZM6 7V10H8V7ZM9 7V10H12V7Z" />
    </DockGroup>
    <DockGroup className="h-[128px] pt-[7px]">
      <div className="flex h-[19.600px] items-center justify-center gap-[1px] text-[13px] leading-none text-[#d0d0d0]">A<span className="h-[13px] w-px bg-[#b8b8b8]" /></div>
      <DockIcon f="M6 1H12V2.500H11V13H9.500V2.500H8.500V13H7V8a3.500 3.500 0 0 1-1-7Z" />
      <DockIcon f="M1 3H13V11H1ZM2 4V10H3V4ZM11 4V10H12V4ZM7 4a3 3 0 1 0 .01 0Z" />
      <div className="relative h-[19.600px] w-[18px] text-[#d0d0d0]">
        <span className="absolute right-[1px] top-[1px] text-[11px] leading-none">A</span>
        <Ico s={8} className="absolute bottom-[3px] left-[2px] text-[#d0d0d0]" d="M1 4H8V12H1ZM6 1H13V9H8" />
      </div>
      <div className="relative h-[19.600px] w-[18px]">
        <Ico s={11} className="absolute right-[1px] top-[1px] text-[#d0d0d0]" f="M6 1H12V2.500H11V13H9.500V2.500H8.500V13H7V8a3.500 3.500 0 0 1-1-7Z" />
        <Ico s={8} className="absolute bottom-[3px] left-[2px] text-[#d0d0d0]" d="M1 4H8V12H1ZM6 1H13V9H8" />
      </div>
      <DockIcon f="M1 2H6L7 4H13V13H1ZM8 5L5 9H7L6 12L10 8H8Z" />
    </DockGroup>
    <DockGroup className="h-[46px] pt-[7px]">
      <DockIcon f="M1 1H9V9H1ZM5 5H13V13H5ZM6.500 9.500V11.500H11.500V6.500H9.500V9.500Z" />
      <DockIcon d="M2 1V13" f="M3 3H10V6H3ZM3 8H13V11H3Z" />
    </DockGroup>
    <DockGroup className="h-[29px] pt-[9px]">
      <DockIcon f="M1 1L7 3L4 4L9 9L7 10L3 5L2 7ZM10 6a3.500 3.500 0 1 0 .01 0ZM10 8a1.500 1.500 0 1 1-.01 0Z" />
    </DockGroup>
    <DockGroup className="h-[32px] pt-[10px]">
      <DockIcon d="M1.500 3H8M1.500 3V12.500H11V7M10.500 1V5M8.500 3H12.500" f="M5 7H7V9H5Z" />
    </DockGroup>
    <DockGroup className="h-[30px] pt-[6px]">
      <DockIcon f="M7 1.500a1.200 1.200 0 1 0 .01 0ZM3 4a1.200 1.200 0 1 0 .01 0ZM11 4a1.200 1.200 0 1 0 .01 0ZM1.500 8a1.200 1.200 0 1 0 .01 0ZM12.500 8a1.200 1.200 0 1 0 .01 0ZM5 10.500a1.200 1.200 0 1 0 .01 0ZM9 10.500a1.200 1.200 0 1 0 .01 0Z" />
    </DockGroup>
  </div>
);

const Backdrop = () => {
  const arcs = Array.from({ length: 17 }, (_, i) => i);
  const rays = Array.from({ length: 16 }, (_, i) => i);
  return (
    <svg viewBox="0 0 1200 800" className="absolute inset-0 h-[800px] w-[1200px]" fill="none" stroke="#fff" strokeOpacity="0.2">
      {arcs.map((i) => (
        <path key={i} d={`M0 ${612 + i * 13} Q ${120 + i * 6} ${660 + i * 13} ${290 - i * 14} 800`} />
      ))}
      {rays.map((i) => (
        <path key={i} d={`M${920 + i * 24} 0 Q ${1060 + i * 24} 70 ${1230 + i * 24} 190`} />
      ))}
    </svg>
  );
};

export default function App() {
  return (
    <div className="relative h-[800px] w-[1200px] overflow-hidden bg-[#e9752f] pl-[38px] pt-[23px] font-['Open_Sans',sans-serif]">
      <Backdrop />
      <div className="relative flex h-[747px] w-[1125px] flex-col rounded-t-[5px] bg-[#535353] shadow-[0_10px_28px_rgba(0,0,0,0.55)]">
        <TitleBar />
        <ControlBar />
        <div className="flex min-h-0 flex-1">
          <LeftToolbar />
          <div className="flex min-w-0 flex-1 flex-col">
            <div className="flex h-[20px] shrink-0 items-end bg-[#424242] pl-[1px]">
              <div className="flex h-[18px] w-[156px] items-center gap-[5px] bg-[#535353] pl-[10px]">
                <X size={8} strokeWidth={2} className="text-[#d0d0d0]" />
                <span className="text-[7.600px] font-semibold text-[#e0e0e0]">*Untitled-1 @ 100% [GPU Preview]</span>
              </div>
            </div>
            <HRuler />
            <div className="relative flex min-h-0 flex-1">
              <VRuler />
              <div className="relative flex-1 overflow-hidden bg-[#676767]">
                <Page />
              </div>
              <div className="flex w-[13px] shrink-0 flex-col bg-[#4d4d4d] pt-[47px]">
                <div className="h-[400px] rounded-full bg-[#666]" />
              </div>
              <GradientPanel />
              <SwatchesPanel />
            </div>
            <StatusBar />
          </div>
          <RightDock />
        </div>
      </div>
    </div>
  );
}
